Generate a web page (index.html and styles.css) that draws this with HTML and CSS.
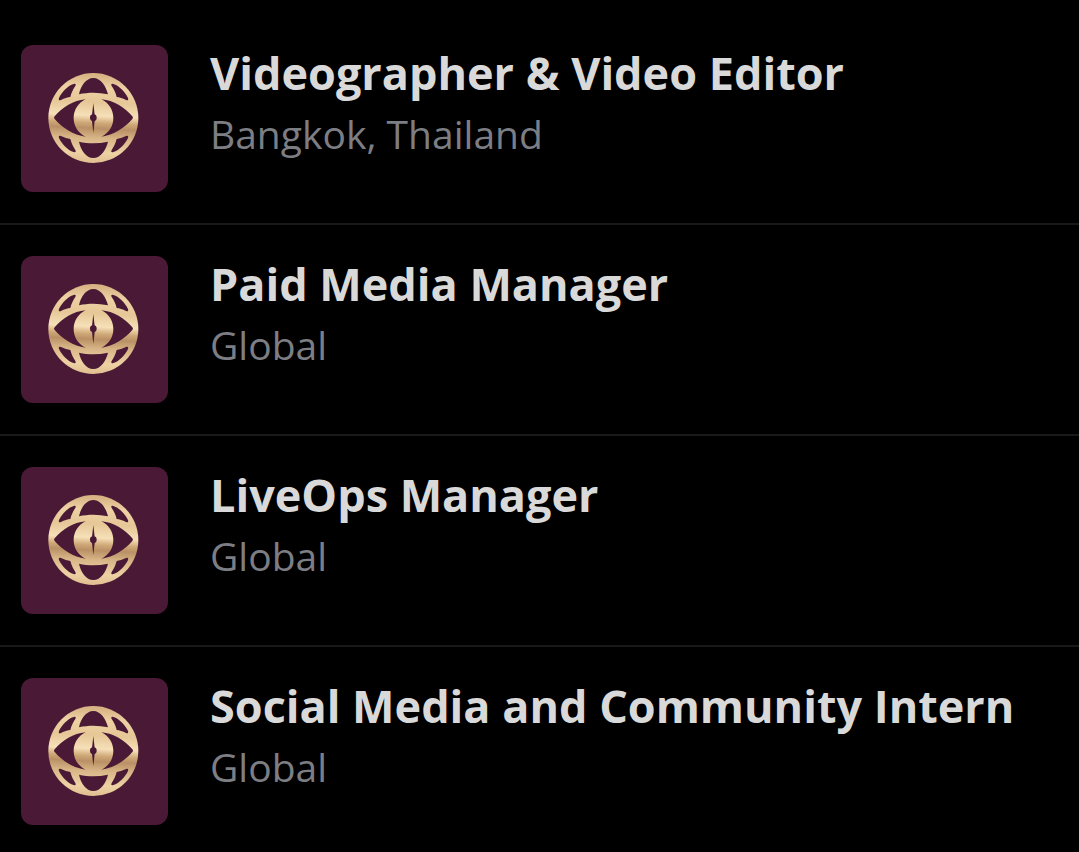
FILE: index.html
```
<!DOCTYPE html>
<html lang="en">
  <head>
    <meta charset="UTF-8" />
    <meta name="viewport" content="width=device-width,initial-scale=1.0" />
    <title>Open Positions</title>
    <link rel="stylesheet" href="styles.css">
  </head>
  <body>
    <!-- shared logo, used by every row -->
    <svg class="sprite" aria-hidden="true">
      <defs>
        <linearGradient id="gold" x1="0.05" y1="0" x2="0" y2="1">
          <stop offset="0" stop-color="#d8b384" />
          <stop offset="0.14" stop-color="#eed2a4" />
          <stop offset="0.3" stop-color="#e6c797" />
          <stop offset="0.45" stop-color="#f6e0b8" />
          <stop offset="0.53" stop-color="#cfa877" />
          <stop offset="0.59" stop-color="#b99065" />
          <stop offset="0.7" stop-color="#d9b688" />
          <stop offset="0.86" stop-color="#eed2a4" />
          <stop offset="1" stop-color="#dcb98b" />
        </linearGradient>
        <path id="corner" d="M191 147C173 152 155 172 147 189C145 196 148 197 153 195C163 190 173 187 181 186C184 173 190 162 196 153C199 147 196 145 191 147Z" />
        <path id="lid" d="M207 178C212 153 228 129 250 129C272 129 288 153 294 178C265 172 235 172 207 178Z" />
        <path id="eye-side" d="M134 244C157 217 190 196 227 193C204 204 191 225 191 249C191 273 204 294 227 305C190 300 157 279 134 252Q130 248 134 244Z" />
      </defs>
      <symbol id="logo" viewBox="33 30 441 441">
        <circle cx="250" cy="249" r="135" fill="url(#gold)" />
        <g fill="#4a1936">
          <use href="#lid" />
          <use href="#lid" transform="matrix(1 0 0 -1 0 498)" />
          <use href="#corner" />
          <use href="#corner" transform="matrix(-1 0 0 1 501 0)" />
          <use href="#corner" transform="matrix(1 0 0 -1 0 498)" />
          <use href="#corner" transform="matrix(-1 0 0 -1 501 498)" />
          <use href="#eye-side" />
          <use href="#eye-side" transform="matrix(-1 0 0 1 501 0)" />
          <circle cx="250" cy="248" r="10" />
          <path d="M250 204L255 248L250 294L245 248Z" />
        </g>
      </symbol>
    </svg>

    <main class="job-list">
      <article class="job">
        <svg class="job-logo" aria-hidden="true"><use href="#logo" /></svg>
        <div class="job-info">
          <h2 class="job-title">Videographer &amp; Video Editor</h2>
          <p class="job-location">Bangkok, Thailand</p>
        </div>
      </article>
      <article class="job">
        <svg class="job-logo" aria-hidden="true"><use href="#logo" /></svg>
        <div class="job-info">
          <h2 class="job-title">Paid Media Manager</h2>
          <p class="job-location">Global</p>
        </div>
      </article>
      <article class="job">
        <svg class="job-logo" aria-hidden="true"><use href="#logo" /></svg>
        <div class="job-info">
          <h2 class="job-title">LiveOps Manager</h2>
          <p class="job-location">Global</p>
        </div>
      </article>
      <article class="job">
        <svg class="job-logo" aria-hidden="true"><use href="#logo" /></svg>
        <div class="job-info">
          <h2 class="job-title">Social Media and Community Intern</h2>
          <p class="job-location">Global</p>
        </div>
      </article>
    </main>
  </body>
</html>
```

FILE: styles.css
```
body {
  margin: 0;
  background: #000;
  color: #d9d9d9;
  font-family: "Open Sans", sans-serif;
}
.sprite {
  display: block;
  width: 0;
  height: 0;
}
.job-list {
  padding-top: 14px;
}
.job {
  display: flex;
  align-items: flex-start;
  gap: 42px;
  padding: 31px 21px;
  border-bottom: 2px solid #18191b;
}
.job:last-child {
  padding-bottom: 27px;
  border-bottom: none;
}
.job-logo {
  flex: none;
  width: 147px;
  height: 147px;
  border-radius: 12px;
  background: #4a1936;
}
.job-info {
  min-width: 0;
}
.job-title {
  margin: 0;
  font-size: 45px;
  line-height: 56px;
  font-weight: 700;
}
.job-location {
  margin: 0;
  color: #7c7e84;
  font-size: 39px;
  line-height: 66px;
}
```
